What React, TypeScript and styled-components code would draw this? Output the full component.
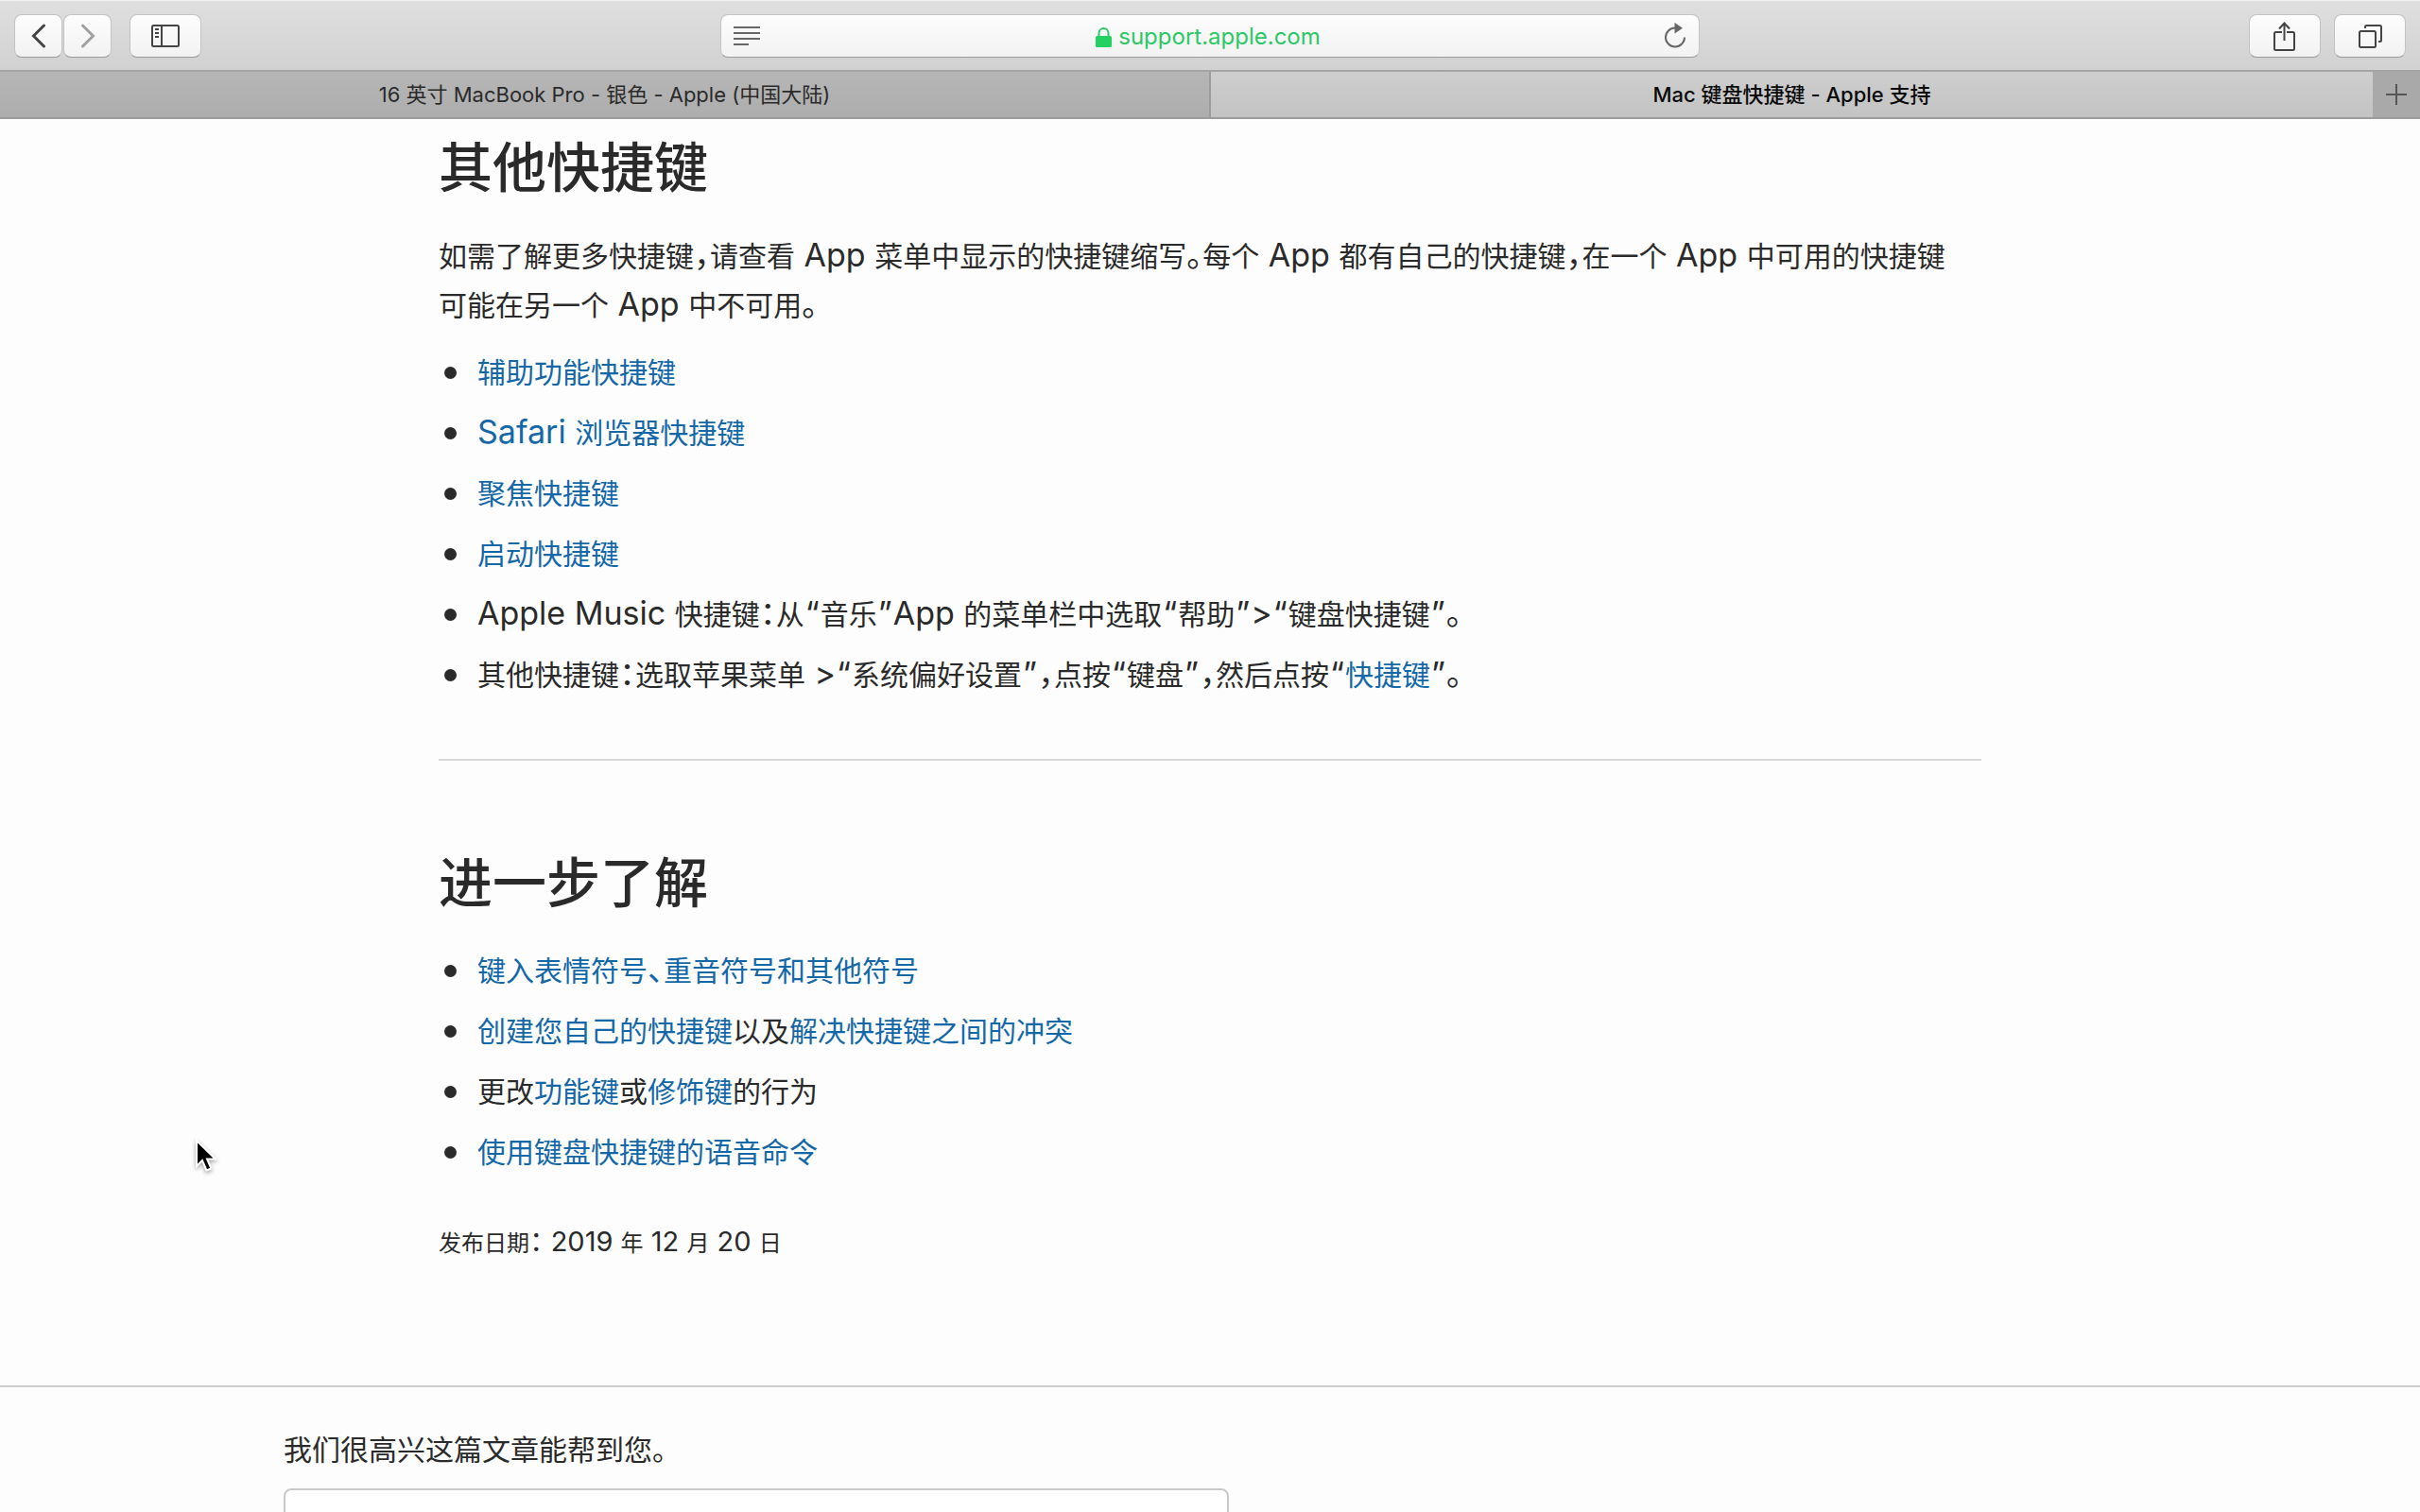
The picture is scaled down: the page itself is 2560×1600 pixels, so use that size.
import React from "react";
import styled, { createGlobalStyle, css } from "styled-components";

const GlobalStyle = createGlobalStyle`
  * { box-sizing: border-box; }
  body {
    margin: 0;
    background: #fdfdfd;
    color: #2a2a2a;
    font-family: Inter, "Noto Sans CJK SC", sans-serif;
  }
  h2, p, ul { margin: 0; padding: 0; }
`;

const Window = styled.div`
  height: 100vh;
  overflow: hidden;
  display: flex;
  flex-direction: column;
`;

const Toolbar = styled.header`
  flex: none;
  display: grid;
  grid-template-columns: 1fr minmax(0, 1036px) 1fr;
  align-items: start;
  height: 76px;
  padding: 14px 15px 0;
  background: linear-gradient(#dfdfdf, #d1d1d1);
  border-top: 1px solid #f2f2f2;
  border-bottom: 2px solid #a5a5a5;
`;

const Group = styled.div<{ $gap: number; $end?: boolean }>`
  display: flex;
  gap: ${(p) => p.$gap}px;
  justify-content: ${(p) => (p.$end ? "flex-end" : "flex-start")};
`;

const raised = css`
  background: linear-gradient(#fdfdfd, #f2f2f2);
  border: 1px solid #c3c3c3;
  border-bottom: 1px solid #999;
  border-radius: 8px;
`;

const ToolButton = styled.button<{ $wide?: boolean; $muted?: boolean }>`
  ${raised}
  display: flex;
  align-items: center;
  justify-content: center;
  width: ${(p) => (p.$wide ? 76 : 51)}px;
  height: 46px;
  padding: 0;
  color: ${(p) => (p.$muted ? "#a0a0a0" : "#444")};
`;

const AddressBar = styled.div`
  ${raised}
  display: grid;
  grid-template-columns: 1fr auto 1fr;
  align-items: center;
  height: 46px;
  padding: 0 13px;
`;

const PlainButton = styled.button<{ $end?: boolean }>`
  display: flex;
  justify-self: ${(p) => (p.$end ? "end" : "start")};
  padding: 0;
  border: 0;
  background: none;
  color: #666;
`;

const Address = styled.a`
  display: flex;
  align-items: center;
  gap: 7px;
  padding: 2px 4px 0 0;
  color: #2cc766;
  font-size: 24px;
  line-height: 32px;
  text-decoration: none;
`;

const TabStrip = styled.nav`
  flex: none;
  display: flex;
  height: 50px;
  border-bottom: 2px solid #9c9c9c;
  background: #b0b0b0;
`;

const Tab = styled.button<{ $active?: boolean; $grow: number }>`
  flex: ${(p) => p.$grow} 1 0;
  padding: 0;
  border: 0;
  border-right: ${(p) => (p.$active ? "0" : "2px solid #9c9c9c")};
  background: ${(p) =>
    p.$active ? "linear-gradient(#cecece, #c3c3c3)" : "linear-gradient(#b6b6b6, #adadad)"};
  color: ${(p) => (p.$active ? "#0a0a0a" : "#2a2a2a")};
  font: ${(p) => (p.$active ? 500 : 400)} 22px/32px Inter, "Noto Sans CJK SC", sans-serif;
`;

const NewTab = styled.button`
  flex: none;
  display: flex;
  align-items: center;
  justify-content: center;
  width: 50px;
  padding: 0;
  border: 0;
  background: #a9a9a9;
  color: #555;
`;

const Page = styled.main`
  flex: 1;
  min-height: 0;
  overflow: hidden;
`;

const Article = styled.article`
  width: calc(100% - 928px);
  min-width: 900px;
  margin: 0 auto;
  padding-top: 12px;
  font-size: 30px;
  line-height: 52px;
  font-feature-settings: "halt";
`;

const Heading = styled.h2`
  margin-bottom: 7px;
  font-size: 57px;
  font-weight: 500;
  line-height: 80px;
`;

const Intro = styled.p`
  padding-top: 20px;
`;

const List = styled.ul`
  padding: 19px 0 0 41px;
  list-style: none;
`;

const Item = styled.li`
  display: flex;
  align-items: center;
  height: 52px;
  margin-bottom: 12px;

  &::before {
    content: "";
    flex: none;
    width: 13px;
    height: 13px;
    margin: 0 22px 0 -35px;
    border-radius: 50%;
    background: #2a2a2a;
  }
`;

const Line = styled.span`
  white-space: pre-wrap;
`;

const Latin = styled.span`
  font-size: 34px;
  line-height: 1;
`;

const Quote = styled(Latin)`
  padding: 0 1px;
`;

const Link = styled.a`
  color: #1468a8;
  text-decoration: none;
`;

const Rule = styled.hr`
  height: 2px;
  margin: 63px 0 90px;
  border: 0;
  background: #d6d6d6;
`;

const Published = styled.p`
  padding: 33px 0 124px;
  font-size: 24px;
  line-height: 52px;
`;

const Digits = styled.span`
  font-size: 29px;
  line-height: 1;
`;

const Feedback = styled.footer`
  padding: 40px 300px 0;
  border-top: 2px solid #cfcfcf;
  font-size: 30px;
  line-height: 52px;
`;

const FeedbackLabel = styled.label`
  display: block;
`;

const FeedbackBox = styled.textarea`
  display: block;
  width: 1000px;
  max-width: 100%;
  height: 160px;
  margin-top: 15px;
  border: 2px solid #cacaca;
  border-radius: 8px;
  background: #fff;
  resize: none;
`;

const Cursor = styled.svg`
  position: absolute;
  left: 205px;
  top: 1204px;
  filter: drop-shadow(0 2px 2px rgba(0, 0, 0, 0.35));
`;

const BackIcon = () => (
  <svg width="16" height="26" viewBox="0 0 16 26" fill="none" stroke="currentColor" strokeWidth="3" strokeLinecap="round">
    <path d="M13.500 2 2.500 13 13.500 24" />
  </svg>
);

const ForwardIcon = () => (
  <svg width="16" height="26" viewBox="0 0 16 26" fill="none" stroke="currentColor" strokeWidth="3" strokeLinecap="round">
    <path d="M2.500 2 13.500 13 2.500 24" />
  </svg>
);

const SidebarIcon = () => (
  <svg width="30" height="24" viewBox="0 0 30 24" fill="none" stroke="currentColor" strokeWidth="2">
    <rect x="1" y="1" width="28" height="22" rx="1.500" />
    <path d="M11 1V23M4 5H8M4 9H8M4 13H8" />
  </svg>
);

const ReaderIcon = () => (
  <svg width="28" height="20" viewBox="0 0 28 20" stroke="currentColor" strokeWidth="2">
    <path d="M0 1H28M0 7H28M0 13H28M0 19H16" />
  </svg>
);

const LockIcon = () => (
  <svg width="17" height="21" viewBox="0 0 17 21">
    <rect x="0" y="9" width="17" height="12" rx="1.500" fill="#23d160" />
    <path d="M3.500 9V6a5 5 0 0 1 10 0V9" fill="none" stroke="#2cc766" strokeWidth="2" />
  </svg>
);

const ReloadIcon = () => (
  <svg width="24" height="28" viewBox="0 0 24 28" fill="none" stroke="currentColor" strokeWidth="2">
    <path d="M12 5.500A10 10 0 1 0 22 15.500" />
    <path d="M11.500 0 20 5.800 11.500 11.500Z" fill="currentColor" stroke="none" />
  </svg>
);

const ShareIcon = () => (
  <svg width="24" height="31" viewBox="0 0 24 31" fill="none" stroke="currentColor" strokeWidth="2">
    <path d="M9 11H2.500Q1 11 1 12.500V28.500Q1 30 2.500 30H20.500Q22 30 22 28.500V12.500Q22 11 20.500 11H14M11.500 20V2M6 7.500 11.500 1.500 17 7.500" />
  </svg>
);

const OverviewIcon = () => (
  <svg width="25" height="25" viewBox="0 0 25 25" fill="none" stroke="currentColor" strokeWidth="2">
    <rect x="1" y="7" width="17" height="17" rx="1.500" />
    <path d="M7 4V2.500Q7 1 8.500 1H22.500Q24 1 24 2.500V16.500Q24 18 22.500 18H21" />
  </svg>
);

const PlusIcon = () => (
  <svg width="22" height="22" viewBox="0 0 22 22" stroke="currentColor" strokeWidth="2">
    <path d="M11 0V22M0 11H22" />
  </svg>
);

export default function App() {
  return (
    <Window>
      <GlobalStyle />
      <Toolbar>
        <Group $gap={19}>
          <Group $gap={1}>
            <ToolButton aria-label="后退"><BackIcon /></ToolButton>
            <ToolButton aria-label="前进" $muted><ForwardIcon /></ToolButton>
          </Group>
          <ToolButton aria-label="边栏" $wide><SidebarIcon /></ToolButton>
        </Group>
        <AddressBar>
          <PlainButton aria-label="阅读器"><ReaderIcon /></PlainButton>
          <Address href="#"><LockIcon />support.apple.com</Address>
          <PlainButton aria-label="重新载入" $end><ReloadIcon /></PlainButton>
        </AddressBar>
        <Group $gap={14} $end>
          <ToolButton aria-label="共享" $wide><ShareIcon /></ToolButton>
          <ToolButton aria-label="标签页概览" $wide><OverviewIcon /></ToolButton>
        </Group>
      </Toolbar>
      <TabStrip>
        <Tab $grow={1280}>16 英寸 MacBook Pro - 银色 - Apple (中国大陆)</Tab>
        <Tab $grow={1230} $active>Mac 键盘快捷键 - Apple 支持</Tab>
        <NewTab aria-label="新标签页"><PlusIcon /></NewTab>
      </TabStrip>
      <Page lang="zh-CN">
        <Article>
          <Heading>其他快捷键</Heading>
          <Intro>
            如需了解更多快捷键<Latin>，</Latin>请查看<Latin> App </Latin>菜单中显示的快捷键缩写<Latin>。</Latin>每个<Latin> App </Latin>都有自己的快捷键<Latin>，</Latin>在一个<Latin> App </Latin>中可用的快捷键
            <br />
            可能在另一个<Latin> App </Latin>中不可用<Latin>。</Latin>
          </Intro>
          <List>
            <Item><Link href="#">辅助功能快捷键</Link></Item>
            <Item><Link href="#"><Latin>Safari </Latin>浏览器快捷键</Link></Item>
            <Item><Link href="#">聚焦快捷键</Link></Item>
            <Item><Link href="#">启动快捷键</Link></Item>
            <Item>
              <Line><Latin>Apple Music </Latin>快捷键<Latin>：</Latin>从<Quote>“</Quote>音乐<Quote>”</Quote><Latin>App </Latin>的菜单栏中选取<Quote>“</Quote>帮助<Quote>”</Quote><Latin>&gt;</Latin><Quote>“</Quote>键盘快捷键<Quote>”</Quote><Latin>。</Latin></Line>
            </Item>
            <Item>
              <Line>其他快捷键<Latin>：</Latin>选取苹果菜单<Latin> &gt;</Latin><Quote>“</Quote>系统偏好设置<Quote>”</Quote><Latin>，</Latin>点按<Quote>“</Quote>键盘<Quote>”</Quote><Latin>，</Latin>然后点按<Quote>“</Quote><Link href="#">快捷键</Link><Quote>”</Quote><Latin>。</Latin></Line>
            </Item>
          </List>
          <Rule />
          <Heading>进一步了解</Heading>
          <List>
            <Item><Link href="#">键入表情符号<Latin>、</Latin>重音符号和其他符号</Link></Item>
            <Item>
              <Line><Link href="#">创建您自己的快捷键</Link>以及<Link href="#">解决快捷键之间的冲突</Link></Line>
            </Item>
            <Item>
              <Line>更改<Link href="#">功能键</Link>或<Link href="#">修饰键</Link>的行为</Line>
            </Item>
            <Item><Link href="#">使用键盘快捷键的语音命令</Link></Item>
          </List>
          <Published>
            发布日期<Digits>： 2019 </Digits>年<Digits> 12 </Digits>月<Digits> 20 </Digits>日
          </Published>
        </Article>
        <Feedback>
          <FeedbackLabel htmlFor="feedback">我们很高兴这篇文章能帮到您。</FeedbackLabel>
          <FeedbackBox id="feedback" />
        </Feedback>
      </Page>
      <Cursor width="26" height="38" viewBox="0 0 26 38" aria-hidden="true">
        <path d="M3 3V30L9 24 13.500 34.500 18.500 32.500 14 22.500H23Z" fill="#000" stroke="#fff" strokeWidth="2" />
      </Cursor>
    </Window>
  );
}
